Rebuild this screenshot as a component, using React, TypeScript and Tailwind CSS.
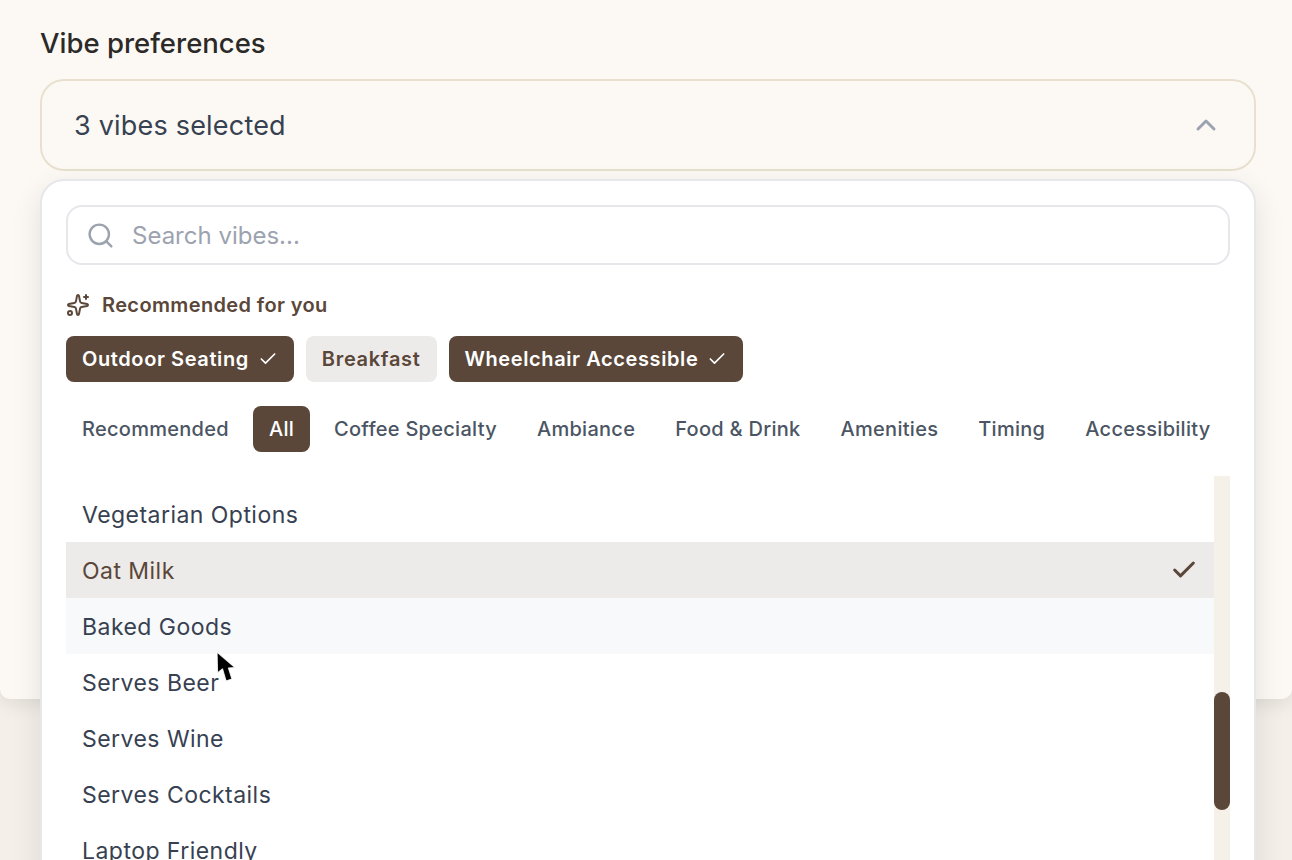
import { Check, ChevronUp, Search, Sparkles } from "lucide-react";

const font = { fontFamily: "Inter, sans-serif" };

function Chip({ label, on }: { label: string; on: boolean }) {
  return (
    <div
      className={
        on
          ? "h-[46px] px-4 rounded-lg bg-[#5a4739] text-white flex items-center gap-[9px] text-[20px] font-semibold tracking-[0.6px]"
          : "h-[46px] px-4 rounded-lg bg-[#edebe9] text-[#5a4739] flex items-center gap-[9px] text-[20px] font-semibold tracking-[0.68px]"
      }
    >
      <span>{label}</span>
      {on && <Check className="w-5 h-5" strokeWidth={2} />}
    </div>
  );
}

const tabs = ["Recommended", "All", "Coffee Specialty", "Ambiance", "Food & Drink", "Amenities", "Timing", "Accessibility"];

const items = ["Vegetarian Options", "Oat Milk", "Baked Goods", "Serves Beer", "Serves Wine", "Serves Cocktails", "Laptop Friendly"];

export default function App() {
  return (
    <div style={font} className="relative w-[1292px] h-[860px] overflow-hidden bg-[#f4f0e9]">
      <div className="h-[699px] bg-[#fcf9f4] rounded-b-[10px] shadow-[0_4px_20px_rgba(0,0,0,0.1)] pl-10 pr-9 pt-[25px]">
        <div className="text-[27.5px] leading-[36px] font-medium text-[#2b2a28]">Vibe preferences</div>
        <div className="mt-[18px] h-[92px] rounded-[24px] border-2 border-[#e8e0cf] flex items-center justify-between pl-[32px] pr-[32px] text-[#374151]">
          <span className="pt-[2px] text-[27px] tracking-[0.2px]">3 vibes selected</span>
          <ChevronUp className="w-8 h-8 text-[#9ca3af]" strokeWidth={2.2} />
        </div>
      </div>

      <div className="absolute left-10 top-[179px] w-[1216px] h-[720px] bg-white border-2 border-[#e5e7eb] rounded-[24px] shadow-[0_10px_30px_rgba(0,0,0,0.1)] px-6 pt-6">
        <div className="h-[60px] rounded-[16px] border-2 border-[#e5e7eb] flex items-center pl-[18px] gap-[17px]">
          <Search className="w-[29px] h-[29px] text-[#9ca3af]" strokeWidth={2} />
          <span className="pt-[2px] text-[24px] text-[#9ca3af]">Search vibes...</span>
        </div>

        <div className="mt-[27px] h-[26px] flex items-center gap-[12px] text-[#5a4739]">
          <Sparkles className="w-6 h-6" strokeWidth={2} />
          <span className="text-[20px] font-semibold tracking-[0.37px]">Recommended for you</span>
        </div>

        <div className="mt-[18px] flex gap-3">
          <Chip label="Outdoor Seating" on />
          <Chip label="Breakfast" on={false} />
          <Chip label="Wheelchair Accessible" on />
        </div>

        <div className="mt-6 flex gap-[8px]">
          {tabs.map((t) => (
            <div
              key={t}
              className={
                t === "All"
                  ? "h-[46px] px-4 rounded-lg flex items-center bg-[#5a4739] text-white text-[20px] font-medium tracking-[0.28px]"
                  : "h-[46px] px-4 rounded-lg flex items-center text-[#4b5563] text-[20px] font-medium tracking-[0.28px]"
              }
            >
              {t}
            </div>
          ))}
        </div>

        <div className="mt-6 flex h-[400px]">
          <div className="flex-1 pt-[10px]">
            {items.map((t) => (
              <div
                key={t}
                className={
                  t === "Oat Milk"
                    ? "h-14 pl-4 flex items-center justify-between bg-[#edebe9] text-[#5a4739] text-[23px] tracking-[0.46px]"
                    : t === "Baked Goods"
                      ? "h-14 pl-4 flex items-center justify-between bg-[#f8f9fb] text-[#374151] text-[23px] tracking-[0.46px]"
                      : "h-14 pl-4 flex items-center justify-between text-[#374151] text-[23px] tracking-[0.46px]"
                }
              >
                <span className="pt-[2px]">{t}</span>
                {t === "Oat Milk" && <Check className="w-7 h-7 mr-4 text-[#5a4739]" strokeWidth={2.6} />}
              </div>
            ))}
          </div>
          <div className="w-4 bg-[#f5f0e8] pt-[216px]">
            <div className="h-[118px] rounded-full bg-[#5a4739]" />
          </div>
        </div>
      </div>

      <svg className="absolute left-[213px] top-[649px]" width="26" height="36" viewBox="0 0 26 36">
        <path d="M4 3 L4.5 24 L9.5 20 L13 32 L19 30 L15.5 19 L22 18.5 Z" fill="#000" stroke="#fff" strokeOpacity="0.85" strokeWidth="1.2" strokeLinejoin="round" />
      </svg>
    </div>
  );
}
